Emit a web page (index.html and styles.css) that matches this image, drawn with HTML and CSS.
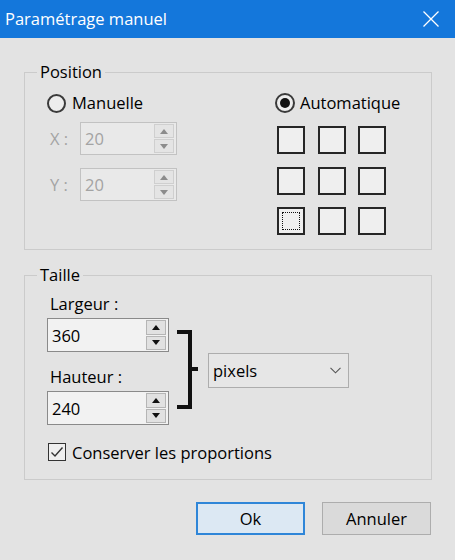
FILE: index.html
```html
<!DOCTYPE html>
<html lang="fr">
<head>
<meta charset="utf-8">
<title>Paramétrage manuel</title>
<link rel="stylesheet" href="styles.css">
</head>
<body>
<div class="window">
  <div class="titlebar">
    <span class="title">Paramétrage manuel</span>
    <svg class="close" width="16" height="16" viewBox="0 0 16 16"><path d="M0.5 0.5 L15.5 15.5 M15.5 0.5 L0.5 15.5" stroke="#fff" stroke-width="1.3" fill="none"/></svg>
  </div>
  <div class="content">
    <fieldset class="group">
      <legend class="legend">Position</legend>
      <div class="pos-body">
        <div class="pos-left">
          <div class="radio-row"><span class="radio"></span><span>Manuelle</span></div>
          <div class="field">
            <span class="field-label disabled-text">X :</span>
            <div class="spin spin-disabled spin-xy">
              <span class="spin-value">20</span>
              <div class="spin-btns">
                <span class="spin-btn"><svg width="8" height="5" viewBox="0 0 8 5"><path d="M0 5 L4 0 L8 5 Z" fill="#8c8c8c"/></svg></span>
                <span class="spin-btn"><svg width="8" height="5" viewBox="0 0 8 5"><path d="M0 0 L4 5 L8 0 Z" fill="#8c8c8c"/></svg></span>
              </div>
            </div>
          </div>
          <div class="field field-second">
            <span class="field-label disabled-text">Y :</span>
            <div class="spin spin-disabled spin-xy">
              <span class="spin-value">20</span>
              <div class="spin-btns">
                <span class="spin-btn"><svg width="8" height="5" viewBox="0 0 8 5"><path d="M0 5 L4 0 L8 5 Z" fill="#8c8c8c"/></svg></span>
                <span class="spin-btn"><svg width="8" height="5" viewBox="0 0 8 5"><path d="M0 0 L4 5 L8 0 Z" fill="#8c8c8c"/></svg></span>
              </div>
            </div>
          </div>
        </div>
        <div class="pos-right">
          <div class="radio-row radio-row-auto"><span class="radio radio-checked"><span class="radio-dot"></span></span><span>Automatique</span></div>
          <div class="anchor-grid">
            <span class="anchor"></span><span class="anchor"></span><span class="anchor"></span>
            <span class="anchor"></span><span class="anchor"></span><span class="anchor"></span>
            <span class="anchor anchor-focus"><span class="focus-rect"></span></span><span class="anchor"></span><span class="anchor"></span>
          </div>
        </div>
      </div>
    </fieldset>

    <fieldset class="group group-size">
      <legend class="legend">Taille</legend>
      <div class="size-body">
        <div class="size-row">
          <div class="size-left">
            <div class="size-label">Largeur :</div>
            <div class="spin spin-size">
              <span class="spin-value">360</span>
              <div class="spin-btns">
                <span class="spin-btn spin-btn-on"><svg width="8" height="5" viewBox="0 0 8 5"><path d="M0 5 L4 0 L8 5 Z" fill="#111"/></svg></span>
                <span class="spin-btn spin-btn-on"><svg width="8" height="5" viewBox="0 0 8 5"><path d="M0 0 L4 5 L8 0 Z" fill="#111"/></svg></span>
              </div>
            </div>
            <div class="size-label size-label-second">Hauteur :</div>
            <div class="spin spin-size">
              <span class="spin-value">240</span>
              <div class="spin-btns">
                <span class="spin-btn spin-btn-on"><svg width="8" height="5" viewBox="0 0 8 5"><path d="M0 5 L4 0 L8 5 Z" fill="#111"/></svg></span>
                <span class="spin-btn spin-btn-on"><svg width="8" height="5" viewBox="0 0 8 5"><path d="M0 0 L4 5 L8 0 Z" fill="#111"/></svg></span>
              </div>
            </div>
          </div>
          <svg class="bracket" width="21" height="79" viewBox="0 0 21 79">
            <rect x="0" y="0" width="15" height="4" fill="#111"/>
            <rect x="11" y="0" width="4" height="79" fill="#111"/>
            <rect x="0" y="75" width="15" height="4" fill="#111"/>
            <rect x="15" y="37" width="6" height="4" fill="#111"/>
          </svg>
          <div class="combo">
            <span>pixels</span>
            <svg width="11" height="7" viewBox="0 0 11 7"><path d="M0.5 0.8 L5.5 5.8 L10.5 0.8" stroke="#555" stroke-width="1.1" fill="none"/></svg>
          </div>
        </div>
        <div class="check-row">
          <span class="checkbox"><svg width="16" height="16" viewBox="0 0 16 16"><path d="M2.5 8.5 L6 12 L13.5 3.5" stroke="#333" stroke-width="1.4" fill="none"/></svg></span>
          <span>Conserver les proportions</span>
        </div>
      </div>
    </fieldset>

    <div class="buttons">
      <button class="btn btn-default" type="button">Ok</button>
      <button class="btn" type="button">Annuler</button>
    </div>
  </div>
</div>
</body>
</html>
```

FILE: styles.css
```css
html, body {
  margin: 0;
  padding: 0;
}
body {
  width: 455px;
  height: 560px;
  overflow: hidden;
  background: #e3e3e3;
  font-family: "Open Sans", "Noto Sans", sans-serif;
  font-size: 16.5px;
  color: #000;
}
.window {
  width: 455px;
  height: 560px;
}
.titlebar {
  height: 38px;
  background: #1477db;
  color: #fff;
  display: flex;
  align-items: center;
  justify-content: space-between;
  padding-left: 5px;
  padding-right: 16px;
  box-sizing: border-box;
  font-size: 16.5px;
}
.title {
  line-height: 38px;
}
.close {
  display: block;
}
.content {
  padding: 24px 23px 0 24px;
}
.group {
  margin: 0;
  padding: 0;
  border: 1px solid #cbcbcb;
  min-width: 0;
}
.legend {
  padding: 0 3px;
  margin-left: 12px;
  line-height: 20px;
}
.pos-body {
  display: flex;
  padding: 10px 0 14px 22px;
}
.pos-left {
  width: 228px;
}
.radio-row {
  height: 22px;
  display: flex;
  align-items: center;
  gap: 6px;
  line-height: 22px;
}
.radio-row-auto {
  gap: 5px;
}
.radio {
  width: 19px;
  height: 19px;
  box-sizing: border-box;
  border: 2px solid #3a3a3a;
  border-radius: 50%;
  background: #ededed;
  display: flex;
  align-items: center;
  justify-content: center;
}
.radio-checked {
  width: 20px;
  height: 20px;
}
.radio-dot {
  width: 10px;
  height: 10px;
  border-radius: 50%;
  background: #111;
}
.field {
  display: flex;
  align-items: center;
  margin-top: 8px;
}
.field-second {
  margin-top: 13px;
}
.field-label {
  width: 33px;
  padding-left: 3px;
  box-sizing: border-box;
}
.disabled-text {
  color: #a3a3a3;
}
.spin {
  display: flex;
  align-items: stretch;
  box-sizing: border-box;
  border: 1px solid #8a8a8a;
  background: #f2f2f2;
}
.spin-disabled {
  border-color: #c2c2c2;
  background: #e9e9e9;
  color: #a3a3a3;
}
.spin-xy {
  width: 97px;
  height: 33px;
}
.spin-size {
  width: 122px;
  height: 34px;
}
.spin-value {
  flex: 1;
  padding-left: 4px;
  display: flex;
  align-items: center;
}
.spin-btns {
  display: flex;
  flex-direction: column;
  gap: 1px;
  margin: 1px 2px 1px 0;
  width: 20px;
}
.spin-btn {
  flex: 1;
  box-sizing: border-box;
  border: 1px solid #cfcfcf;
  background: #e4e4e4;
  display: flex;
  align-items: center;
  justify-content: center;
}
.spin-btn-on {
  border-color: #b5b5b5;
  background: #e1e1e1;
}
.pos-right {
  display: flex;
  flex-direction: column;
}
.anchor-grid {
  display: grid;
  grid-template-columns: repeat(3, 28px);
  grid-auto-rows: 28px;
  gap: 12.5px;
  margin-top: 12px;
  margin-left: 2px;
}
.anchor {
  box-sizing: border-box;
  border: 2px solid #262626;
  background: #efefef;
}
.anchor-focus {
  padding: 3px;
  display: flex;
}
.focus-rect {
  flex: 1;
  border: 1px dotted #111;
}
.group-size {
  margin-top: 15px;
}
.size-body {
  padding: 8px 0 16px 22px;
}
.size-row {
  display: flex;
  align-items: flex-start;
}
.size-left {
  width: 122px;
}
.size-label {
  line-height: 22px;
  padding-left: 3px;
  margin-bottom: 3px;
}
.size-label-second {
  margin-top: 14px;
}
.bracket {
  display: block;
  margin-left: 8px;
  margin-top: 37px;
}
.combo {
  margin-left: 10px;
  margin-top: 60px;
  width: 141px;
  height: 35px;
  box-sizing: border-box;
  border: 1px solid #adadad;
  background: #e6e6e6;
  display: flex;
  align-items: center;
  justify-content: space-between;
  padding: 0 7px 0 4px;
}
.check-row {
  display: flex;
  align-items: center;
  height: 22px;
  margin-top: 16px;
  gap: 6px;
  padding-left: 1px;
}
.checkbox {
  width: 18px;
  height: 18px;
  box-sizing: border-box;
  border: 1px solid #333;
  background: #efefef;
  display: flex;
  align-items: center;
  justify-content: center;
}
.checkbox svg {
  display: block;
}
.buttons {
  display: flex;
  justify-content: flex-end;
  gap: 17px;
  margin-top: 22px;
  padding-right: 1px;
}
.btn {
  width: 109px;
  height: 33px;
  box-sizing: border-box;
  border: 1px solid #adadad;
  background: #dadada;
  font-family: "Open Sans", "Noto Sans", sans-serif;
  font-size: 16.5px;
  color: #000;
  padding: 0;
  margin: 0;
}
.btn-default {
  border: 2px solid #2f86d8;
  background: #dce8f3;
}
```
